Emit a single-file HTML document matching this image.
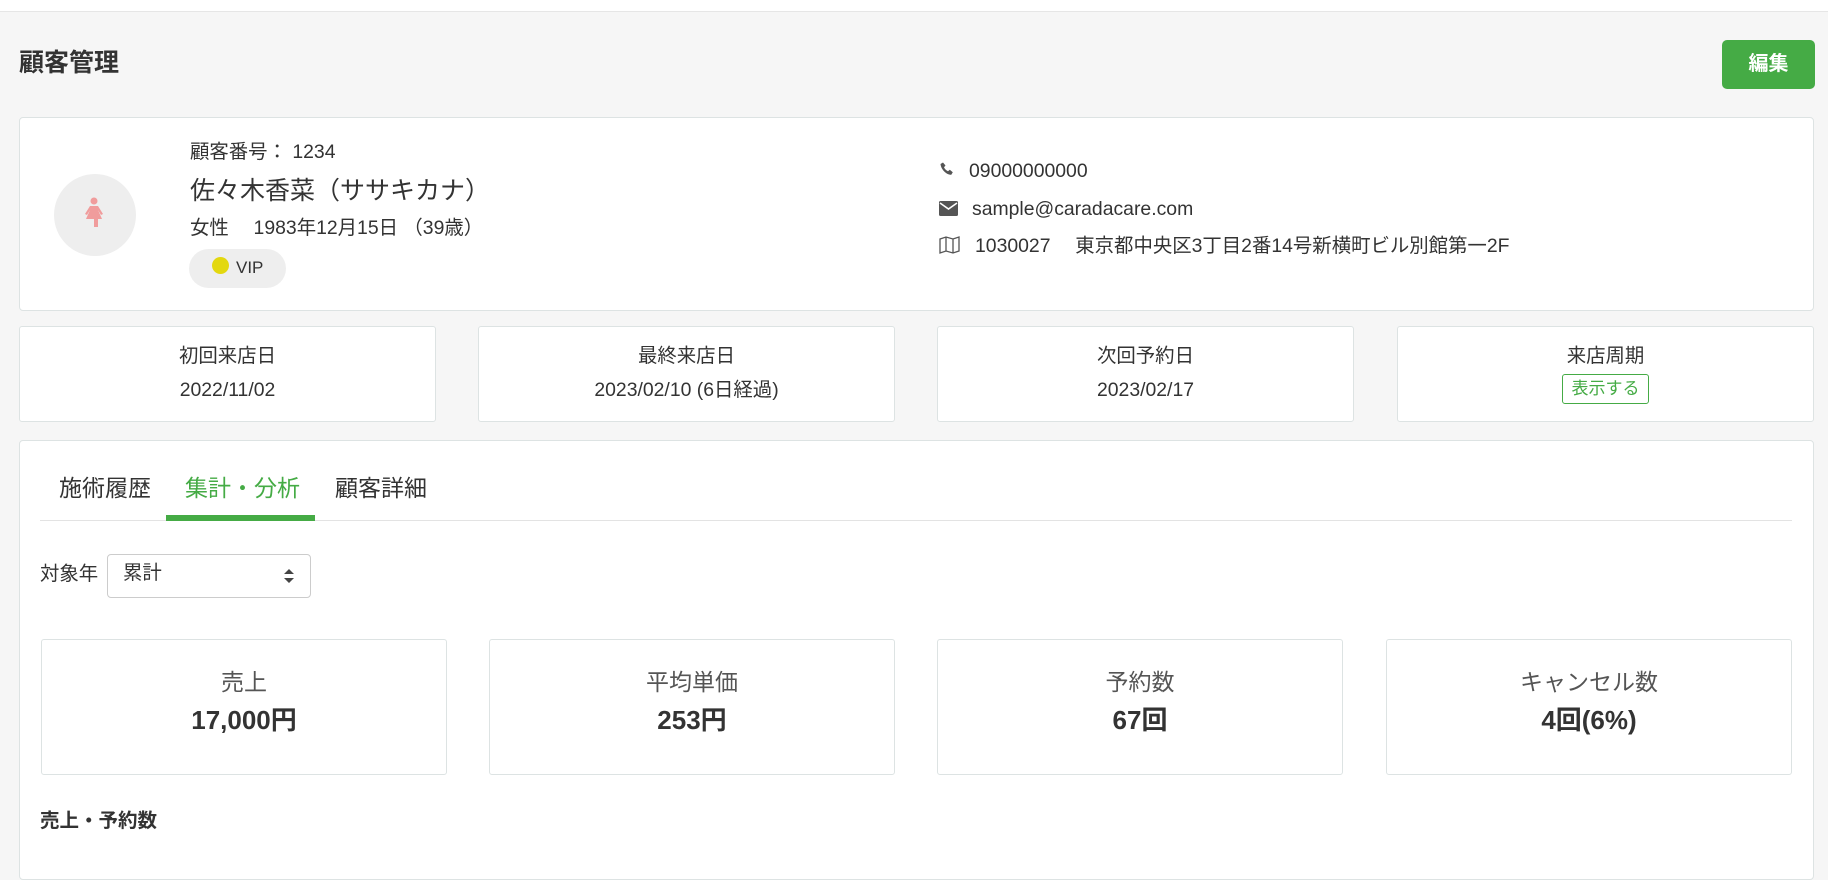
<!DOCTYPE html>
<html><head><meta charset="utf-8"><style>
*{box-sizing:border-box;margin:0;padding:0}
body{width:1828px;height:833px;overflow:hidden;background:#f6f6f6;font-family:"Liberation Sans","Noto Sans CJK JP",sans-serif;color:#333;position:relative}
.a{position:absolute}
.top{left:0;top:0;width:1828px;height:12px;background:#fff;border-bottom:1px solid #e6e6e6}
.card{background:#fff;border:1px solid #dde3e3;border-radius:4px}
.box{background:#fff;border:1px solid #dde3e3;border-radius:3px;text-align:center}
.t20{font-size:19.4px;line-height:24px}
.lb{font-size:23px;margin-top:28px;color:#555;line-height:28px}
.vl{font-size:26px;font-weight:bold;margin-top:8px;line-height:32px}
</style></head><body>
<div class="a top"></div>
<div class="a" style="left:19px;top:47px;font-size:25px;font-weight:bold;line-height:32px">顧客管理</div>
<div class="a" style="left:1722px;top:40px;width:93px;height:49px;background:#45ab45;border-radius:5px;color:#fff;font-weight:bold;font-size:20px;line-height:49px;text-align:center">編集</div>

<div class="a card" style="left:19px;top:117px;width:1795px;height:194px"></div>
<div class="a" style="left:54px;top:174px;width:82px;height:82px;border-radius:50%;background:#eee"></div>
<svg class="a" style="left:82px;top:196px" width="24" height="32" viewBox="0 0 24 32"><circle cx="12" cy="5" r="3.5" fill="#f09c9c"/><path d="M8 10h8l5 8-2 1-3-5 4 9h-4v8h-4v-8H4l4-9-3 5-2-1z" fill="#f09c9c"/></svg>
<div class="a t20" style="left:190px;top:140px">顧客番号： 1234</div>
<div class="a" style="left:190px;top:175px;font-size:25px;line-height:32px">佐々木香菜（ササキカナ）</div>
<div class="a t20" style="left:190px;top:216px">女性　 1983年12月15日 （39歳）</div>
<div class="a" style="left:189px;top:249px;width:97px;height:39px;border-radius:20px;background:#eee"></div>
<div class="a" style="left:212px;top:257px;width:17px;height:17px;border-radius:50%;background:#e3d80f"></div>
<div class="a" style="left:236px;top:257px;font-size:17px;line-height:22px">VIP</div>

<svg class="a" style="left:940px;top:162px" width="14" height="14" viewBox="0 0 14 14"><path d="M3 0.5l2.5 3-1.5 1.8c.8 1.8 2.2 3.2 4 4l1.8-1.5 3 2.5-1.5 2.5C6.5 13 1 7.5.5 2z" fill="#555"/></svg>
<div class="a t20" style="left:969px;top:159px">09000000000</div>
<svg class="a" style="left:939px;top:201px" width="19" height="15" viewBox="0 0 19 15"><rect width="19" height="15" rx="1.5" fill="#555"/><path d="M1 2l8.5 6 8.5-6" stroke="#fff" stroke-width="1.6" fill="none"/></svg>
<div class="a t20" style="left:972px;top:197px">sample@caradacare.com</div>
<svg class="a" style="left:939px;top:236px" width="21" height="18" viewBox="0 0 21 18"><path d="M1 3l6-2 7 2 6-2v14l-6 2-7-2-6 2zM7 1v14M14 3v14" stroke="#555" stroke-width="1.3" fill="none"/></svg>
<div class="a t20" style="left:975px;top:234px">1030027　 東京都中央区3丁目2番14号新横町ビル別館第一2F</div>

<div class="a box" style="left:19px;top:326px;width:417px;height:96px"><div class="t20" style="margin-top:17px">初回来店日</div><div class="t20" style="margin-top:10px">2022/11/02</div></div>
<div class="a box" style="left:478px;top:326px;width:417px;height:96px"><div class="t20" style="margin-top:17px">最終来店日</div><div class="t20" style="margin-top:10px">2023/02/10 (6日経過)</div></div>
<div class="a box" style="left:937px;top:326px;width:417px;height:96px"><div class="t20" style="margin-top:17px">次回予約日</div><div class="t20" style="margin-top:10px">2023/02/17</div></div>
<div class="a box" style="left:1397px;top:326px;width:417px;height:96px"><div class="t20" style="margin-top:17px">来店周期</div></div>
<div class="a" style="left:1562px;top:374px;width:87px;height:30px;border:1px solid #45ab45;border-radius:3px;color:#45ab45;font-size:17px;line-height:28px;text-align:center">表示する</div>

<div class="a card" style="left:19px;top:440px;width:1795px;height:440px"></div>
<div class="a" style="left:59px;top:473px;font-size:23px;line-height:30px">施術履歴</div>
<div class="a" style="left:185px;top:473px;font-size:23px;line-height:30px;color:#45ab45">集計・分析</div>
<div class="a" style="left:335px;top:473px;font-size:23px;line-height:30px">顧客詳細</div>
<div class="a" style="left:40px;top:520px;width:1752px;height:1px;background:#e3e3e3"></div>
<div class="a" style="left:166px;top:515px;width:149px;height:6px;background:#45ab45"></div>

<div class="a t20" style="left:40px;top:562px">対象年</div>
<div class="a" style="left:107px;top:554px;width:204px;height:44px;border:1px solid #ccc;border-radius:4px;background:#fff"></div>
<div class="a t20" style="left:123px;top:561px">累計</div>
<svg class="a" style="left:283px;top:568px" width="12" height="16" viewBox="0 0 12 16"><path d="M6 1l5 5H1zM6 15l5-5H1z" fill="#444"/></svg>

<div class="a box" style="left:41px;top:639px;width:406px;height:136px"><div class="lb">売上</div><div class="vl">17,000円</div></div>
<div class="a box" style="left:489px;top:639px;width:406px;height:136px"><div class="lb">平均単価</div><div class="vl">253円</div></div>
<div class="a box" style="left:937px;top:639px;width:406px;height:136px"><div class="lb">予約数</div><div class="vl">67回</div></div>
<div class="a box" style="left:1386px;top:639px;width:406px;height:136px"><div class="lb">キャンセル数</div><div class="vl">4回(6%)</div></div>

<div class="a" style="left:40px;top:808px;font-size:19.5px;font-weight:bold;line-height:26px">売上・予約数</div>
</body></html>
